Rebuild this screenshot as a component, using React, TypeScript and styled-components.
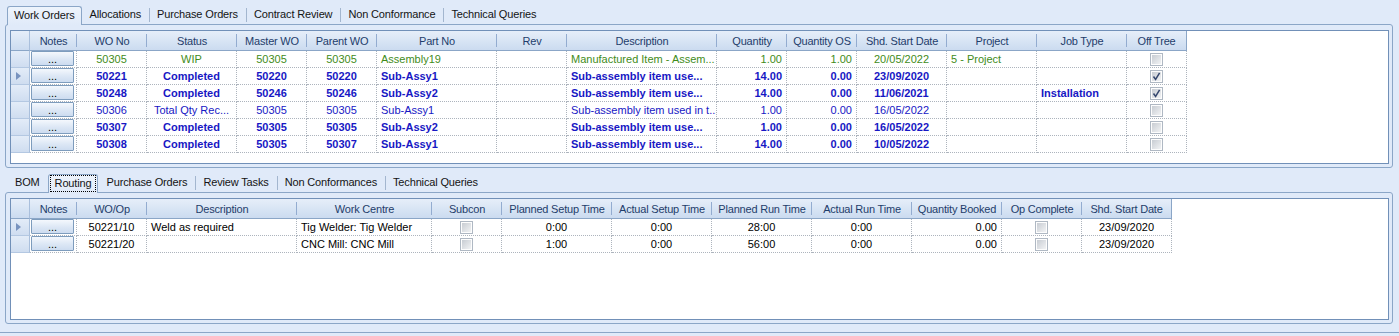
import styled, { createGlobalStyle, css } from "styled-components"

const GlobalStyle = createGlobalStyle`
  html, body {
    margin: 0;
    padding: 0;
    background: #e0eaf9;
  }
  body {
    font-family: "Liberation Sans", Arial, sans-serif;
    font-size: 11px;
    color: #000;
  }
  * {
    box-sizing: border-box;
  }
`

type Align = "left" | "center" | "right"
type Tone = "green" | "blue" | "black"

interface Column {
  title: string
  width: number
  align?: Align
  kind?: "button" | "check"
}

interface GridRow {
  cells: (string | boolean)[]
  tone?: Tone
  bold?: boolean
  selected?: boolean
}

const toneColor: Record<Tone, string> = {
  green: "#3f8c1a",
  blue: "#1717c4",
  black: "#000",
}

const topTabs = ["Work Orders", "Allocations", "Purchase Orders", "Contract Review", "Non Conformance", "Technical Queries"]
const bottomTabs = ["BOM", "Routing", "Purchase Orders", "Review Tasks", "Non Conformances", "Technical Queries"]

const workOrderColumns: Column[] = [
  { title: "Notes", width: 47, kind: "button" },
  { title: "WO No", width: 70, align: "center" },
  { title: "Status", width: 90, align: "center" },
  { title: "Master WO", width: 70, align: "center" },
  { title: "Parent WO", width: 70, align: "center" },
  { title: "Part No", width: 120 },
  { title: "Rev", width: 70, align: "center" },
  { title: "Description", width: 150 },
  { title: "Quantity", width: 70, align: "right" },
  { title: "Quantity OS", width: 70, align: "right" },
  { title: "Shd. Start Date", width: 90, align: "center" },
  { title: "Project", width: 90 },
  { title: "Job Type", width: 90 },
  { title: "Off Tree", width: 60, kind: "check" },
]

const workOrders: GridRow[] = [
  {
    tone: "green",
    cells: ["", "50305", "WIP", "50305", "50305", "Assembly19", "", "Manufactured Item - Assem...", "1.00", "1.00", "20/05/2022", "5 - Project", "", false],
  },
  {
    tone: "blue",
    bold: true,
    selected: true,
    cells: ["", "50221", "Completed", "50220", "50220", "Sub-Assy1", "", "Sub-assembly item use...", "14.00", "0.00", "23/09/2020", "", "", true],
  },
  {
    tone: "blue",
    bold: true,
    cells: ["", "50248", "Completed", "50246", "50246", "Sub-Assy2", "", "Sub-assembly item use...", "14.00", "0.00", "11/06/2021", "", "Installation", true],
  },
  {
    tone: "blue",
    cells: ["", "50306", "Total Qty Rec...", "50305", "50305", "Sub-Assy1", "", "Sub-assembly item used in t...", "1.00", "0.00", "16/05/2022", "", "", false],
  },
  {
    tone: "blue",
    bold: true,
    cells: ["", "50307", "Completed", "50305", "50305", "Sub-Assy2", "", "Sub-assembly item use...", "1.00", "0.00", "16/05/2022", "", "", false],
  },
  {
    tone: "blue",
    bold: true,
    cells: ["", "50308", "Completed", "50305", "50307", "Sub-Assy1", "", "Sub-assembly item use...", "14.00", "0.00", "10/05/2022", "", "", false],
  },
]

const routingColumns: Column[] = [
  { title: "Notes", width: 47, kind: "button" },
  { title: "WO/Op", width: 70, align: "center" },
  { title: "Description", width: 150 },
  { title: "Work Centre", width: 135 },
  { title: "Subcon", width: 70, kind: "check" },
  { title: "Planned Setup Time", width: 110, align: "center" },
  { title: "Actual Setup Time", width: 100, align: "center" },
  { title: "Planned Run Time", width: 100, align: "center" },
  { title: "Actual Run Time", width: 100, align: "center" },
  { title: "Quantity Booked", width: 90, align: "right" },
  { title: "Op Complete", width: 80, kind: "check" },
  { title: "Shd. Start Date", width: 90, align: "center" },
]

const routing: GridRow[] = [
  {
    selected: true,
    cells: ["", "50221/10", "Weld as required", "Tig Welder: Tig Welder", false, "0:00", "0:00", "28:00", "0:00", "0.00", false, "23/09/2020"],
  },
  {
    cells: ["", "50221/20", "", "CNC Mill: CNC Mill", false, "1:00", "0:00", "56:00", "0:00", "0.00", false, "23/09/2020"],
  },
]

const Page = styled.div`
  width: 1399px;
  height: 336px;
  display: flex;
  flex-direction: column;
  overflow: hidden;
`

const Workspace = styled.div`
  display: flex;
  flex-direction: column;
  padding: 0 6px 0 5px;
  margin-bottom: 8px;
`

const StatusBar = styled.div`
  flex: 1;
  border-top: 1px solid #8ba6c7;
`

const TabStrip = styled.div`
  display: flex;
  align-items: flex-end;
  height: 24px;
  padding-left: 2px;
`

const Tab = styled.div<{ $active?: boolean; $sep?: boolean; $focus?: boolean }>`
  position: relative;
  height: 18px;
  padding: 0 8px;
  line-height: 17px;
  color: #141414;
  letter-spacing: -0.15px;
  white-space: nowrap;

  ${({ $sep }) =>
    $sep &&
    css`
      &::before {
        content: "";
        position: absolute;
        left: 0;
        top: 2px;
        bottom: 2px;
        width: 1px;
        background: #a3b6cf;
      }
    `}

  ${({ $active, $focus }) =>
    $active &&
    css`
      z-index: 1;
      height: 19px;
      margin-bottom: -1px;
      padding: 0 ${$focus ? 1 : 6}px;
      border: 1px solid #8ba6c7;
      border-bottom: none;
      border-radius: 3px 3px 0 0;
      background: linear-gradient(#eef4fc, #e0eaf9);
    `}
`

const FocusLabel = styled.span`
  display: block;
  height: 17px;
  padding: 0 4px;
  line-height: 15px;
  border: 1px dotted #000;
`

const Panel = styled.div<{ $h: number }>`
  height: ${({ $h }) => $h}px;
  display: flex;
  padding: 5px 3px 3px 4px;
  border: 1px solid #8ba6c7;
  border-radius: 3px;
  background: #e0eaf9;
`

const GridBox = styled.div`
  flex: 1;
  display: flex;
  flex-direction: column;
  overflow: hidden;
  background: #fff;
  border: 1px solid #7190b8;
`

const HeaderRow = styled.div`
  display: flex;
  height: 20px;
`

const headerFace = css`
  background: linear-gradient(#e6eef9 0%, #dae6f5 45%, #cbdbf0 100%);
  border-bottom: 1px solid #8ba6c7;
`

const Corner = styled.div`
  ${headerFace};
  width: 19px;
  flex: none;
  border-right: 1px solid #a9bfdc;
`

const HeaderCell = styled.div<{ $w: number }>`
  ${headerFace};
  position: relative;
  width: ${({ $w }) => $w}px;
  flex: none;
  padding-top: 1px;
  line-height: 18px;
  text-align: center;
  white-space: nowrap;
  overflow: hidden;
  color: #1f3d6b;
  letter-spacing: -0.2px;

  &::after {
    content: "";
    position: absolute;
    right: 0;
    top: 3px;
    bottom: 3px;
    width: 1px;
    background: #93acd0;
    box-shadow: 1px 0 0 #f4f8fd;
  }

  &:last-child {
    border-right: 1px solid #8ba6c7;
  }

  &:last-child::after {
    display: none;
  }
`

const Row = styled.div`
  display: flex;
  height: 17px;
`

const RowHeader = styled.div`
  width: 19px;
  flex: none;
  display: flex;
  align-items: center;
  padding-left: 5px;
  background: linear-gradient(#e3ecf8, #cfddf0);
  border-right: 1px solid #a9bfdc;
  border-bottom: 1px solid #b4c8e2;
`

const Pointer = styled.span`
  width: 0;
  height: 0;
  border-left: 5px solid #7893bf;
  border-top: 4px solid transparent;
  border-bottom: 4px solid transparent;
`

const Cell = styled.div<{ $w: number; $align?: Align; $tone?: Tone; $bold?: boolean }>`
  width: ${({ $w }) => $w}px;
  flex: none;
  display: flex;
  align-items: center;
  justify-content: ${({ $align }) => ($align === "right" ? "flex-end" : $align === "center" ? "center" : "flex-start")};
  padding: 0 4px;
  white-space: nowrap;
  overflow: hidden;
  line-height: 16px;
  color: ${({ $tone }) => toneColor[$tone ?? "black"]};
  font-weight: ${({ $bold }) => ($bold ? 700 : 400)};
  border-right: 1px dotted #adb4bd;
  border-bottom: 1px dotted #adb4bd;
`

const ButtonCell = styled(Cell)`
  padding: 0 2px 0 1px;
  align-items: flex-start;
`

const NotesButton = styled.div`
  width: 43px;
  height: 15px;
  border: 1px solid #7d9cbd;
  border-radius: 1px;
  background: linear-gradient(#f4f8fd, #dce7f5 55%, #cddcf0);
  color: #000;
  font-weight: 400;
  text-align: center;
  line-height: 15px;
`

const Box = styled.span`
  width: 13px;
  height: 13px;
  display: flex;
  align-items: center;
  justify-content: center;
  border: 1px solid #afb8c3;
  box-shadow: inset 0 0 0 1px #fdfdfd;
  background: linear-gradient(135deg, #c3c8cf, #f6f7f8);
`

const CheckBox = ({ checked }: { checked: boolean }) => (
  <Box>
    {checked && (
      <svg width="11" height="11" viewBox="0 0 11 11">
        <path d="M2.5 5.5 L4.6 8.4 L8.6 1.8" stroke="#34466d" strokeWidth="1.5" fill="none" />
      </svg>
    )}
  </Box>
)

const DataGrid = ({ columns, rows }: { columns: Column[]; rows: GridRow[] }) => (
  <GridBox>
    <HeaderRow>
      <Corner />
      {columns.map((c) => (
        <HeaderCell key={c.title} $w={c.width}>
          {c.title}
        </HeaderCell>
      ))}
    </HeaderRow>
    {rows.map((r, i) => (
      <Row key={i}>
        <RowHeader>{r.selected && <Pointer />}</RowHeader>
        {columns.map((c, j) => {
          const value = r.cells[j]
          if (c.kind === "button")
            return (
              <ButtonCell key={c.title} $w={c.width}>
                <NotesButton>...</NotesButton>
              </ButtonCell>
            )
          if (c.kind === "check")
            return (
              <Cell key={c.title} $w={c.width} $align="center">
                <CheckBox checked={value === true} />
              </Cell>
            )
          return (
            <Cell key={c.title} $w={c.width} $align={c.align} $tone={r.tone} $bold={r.bold}>
              {value}
            </Cell>
          )
        })}
      </Row>
    ))}
  </GridBox>
)

const Tabs = ({ items, active, focus }: { items: string[]; active: number; focus?: boolean }) => (
  <TabStrip>
    {items.map((t, i) => {
      const isActive = i === active
      const sep = i > 0 && !isActive && i - 1 !== active
      return (
        <Tab key={t} $active={isActive} $sep={sep} $focus={isActive && focus}>
          {isActive && focus ? <FocusLabel>{t}</FocusLabel> : t}
        </Tab>
      )
    })}
  </TabStrip>
)

export default function App() {
  return (
    <>
      <GlobalStyle />
      <Page>
        <Workspace>
          <Tabs items={topTabs} active={0} />
          <Panel $h={144}>
            <DataGrid columns={workOrderColumns} rows={workOrders} />
          </Panel>
          <Tabs items={bottomTabs} active={1} focus />
          <Panel $h={132}>
            <DataGrid columns={routingColumns} rows={routing} />
          </Panel>
        </Workspace>
        <StatusBar />
      </Page>
    </>
  )
}
